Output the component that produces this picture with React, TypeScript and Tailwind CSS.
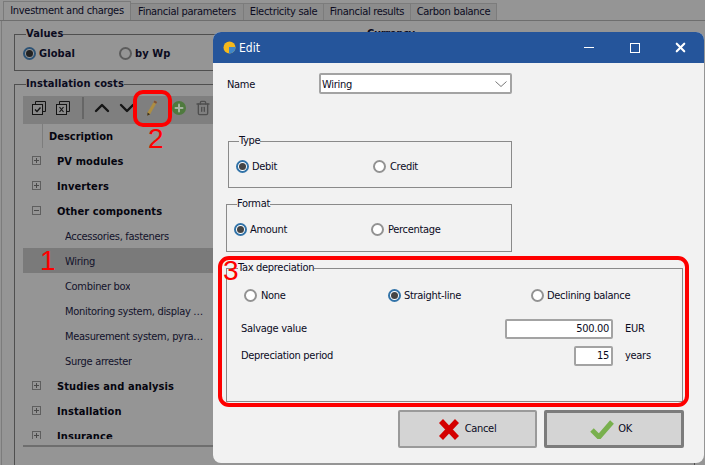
import React from 'react';
import { ChevronDown, ChevronUp, Plus, Trash2, X } from 'lucide-react';

const Radio: React.FC<{ on?: boolean; label: string; className?: string; dim?: boolean }> = ({ on, label, className = '', dim }) => (
  <label className={`flex items-center gap-[3px] ${className}`}>
    <span
      className={`flex h-[13px] w-[13px] shrink-0 items-center justify-center rounded-full border-2 ${
        dim ? (on ? 'border-[#2c5275] bg-[#959595]' : 'border-[#5c5c5c] bg-[#959595]') : on ? 'border-[#3273a8] bg-white' : 'border-[#939393] bg-white'
      }`}
    >
      {on && <span className={`h-[7px] w-[7px] rounded-full ${dim ? 'bg-[#222222]' : 'bg-[#444444]'}`} />}
    </span>
    <span className="pt-px">{label}</span>
  </label>
);

const TreeGroup: React.FC<{ label: string; open?: boolean }> = ({ label, open }) => (
  <div className="flex h-[25px] items-center pl-[9px]">
    <span className="flex h-[9px] w-[9px] items-center justify-center border border-[#5f5f5f]">
      <span className="relative block h-px w-[5px] bg-[#4a4a4a]">
        {!open && <span className="absolute left-[2px] top-[-2px] block h-[5px] w-px bg-[#4a4a4a]" />}
      </span>
    </span>
    <span className="ml-[16px] pt-[2px] font-bold tracking-[0.1px] text-[#05050f]">{label}</span>
  </div>
);

const TreeItem: React.FC<{ label: string; active?: boolean }> = ({ label, active }) => (
  <div className={`flex h-[25px] items-center pl-[42px] ${active ? 'bg-[#7a7a7a]' : ''}`}>
    <span className="truncate pt-[2px] text-[#12122a]">{label}</span>
  </div>
);

const tabs = [
  { label: 'Financial parameters', w: 'w-[113px]' },
  { label: 'Electricity sale', w: 'w-[80px]' },
  { label: 'Financial results', w: 'w-[87px]' },
  { label: 'Carbon balance', w: 'w-[86px]' },
];

export default function App() {
  return (
    <div className="relative h-[465px] w-[705px] overflow-hidden bg-[#959595] font-['DejaVu_Sans',sans-serif] font-stretch-condensed text-[11px] leading-[14px] tracking-[-0.3px] text-[#0b0b1e]">
      {/* page behind the dialog */}
      <div className="flex h-[21px] items-end border-b border-[#6e6e6e] pl-[3px]">
        <div className="flex h-[19px] w-[128px] items-center justify-center border border-b-0 border-[#7a7a7a] bg-[#959595]">
          Investment and charges
        </div>
        {tabs.map(t => (
          <div key={t.label} className={`flex h-[17px] items-center justify-center border-r border-t border-[#7c7c7c] bg-[#8c8c8c] ${t.w}`}>
            {t.label}
          </div>
        ))}
      </div>

      <div className="ml-[1px] h-[444px] border-l border-[#7c7c7c] pl-[12px] pr-[10px] pt-[6px]">
        <div className="flex gap-[12px]">
          <fieldset className="h-[44px] w-[331px] border border-[#4f4f4f] pl-[11px]">
            <legend className="font-bold tracking-[0.1px]">Values</legend>
            <div className="mt-[5px] flex font-bold tracking-[0.1px]">
              <Radio dim on label="Global" className="-ml-[3px] w-[96px]" />
              <Radio dim label="by Wp" />
            </div>
          </fieldset>
          <fieldset className="h-[44px] flex-1 border border-[#4f4f4f] pl-[9px]">
            <legend className="font-bold">Currency</legend>
          </fieldset>
        </div>

        <fieldset className="mt-[6px] h-[400px] border border-[#4f4f4f] pl-[8px]">
          <legend className="ml-[3px] font-bold tracking-[0.1px]">Installation costs</legend>
          <div className="mt-[5px] w-[190px]">
            <div className="flex h-[28px] items-center bg-[#7f7f7f] pb-[4px] pl-[9px]">
              <svg className="shrink-0" width="14" height="14" viewBox="0 0 14 14" fill="none" stroke="#141414">
                <path d="M3.5 3V.5h10v10H11" />
                <rect x=".5" y="3.5" width="10" height="10" fill="#8a8a8a" />
                <path d="M3 8.5l2 2 3.5-4" strokeWidth="1.4" />
              </svg>
              <svg className="ml-[10px] shrink-0" width="14" height="14" viewBox="0 0 14 14" fill="none" stroke="#141414">
                <path d="M3.5 3V.5h10v10H11" />
                <rect x=".5" y="3.5" width="10" height="10" fill="#8a8a8a" />
                <path d="M3.5 6l4 5M7.5 6l-4 5" strokeWidth="1.2" />
              </svg>
              <span className="ml-[12px] h-[22px] w-[2px] shrink-0 bg-[#666666]" />
              <ChevronUp className="ml-[6px] shrink-0 text-[#151515]" size={24} strokeWidth={2.4} />
              <ChevronDown className="ml-[1px] shrink-0 text-[#151515]" size={24} strokeWidth={2.4} />
              <svg className="ml-[7px] shrink-0" width="12" height="18" viewBox="0 0 12 18">
                <path d="M8.5 1.5l2.6 1.4-7 12.4-2.8 1.4.2-3.2z" fill="#ad8d42" />
                <path d="M8.5 1.5l2.6 1.4-1 1.8-2.6-1.4z" fill="#7d4f3a" />
                <path d="M1.3 16.7l.2-3.2 2.6 1.8z" fill="#3a3020" />
              </svg>
              <span className="ml-[14px] flex h-[14px] w-[14px] shrink-0 items-center justify-center rounded-full bg-[#4f7a3e]">
                <Plus className="text-[#a5b3a0]" size={12} strokeWidth={4} />
              </span>
              <Trash2 className="ml-[9px] shrink-0 text-[#4f4f4f]" size={16} strokeWidth={2} />
            </div>
            <div className="flex h-[24px] items-center">
              <span className="h-full w-[20px] border-r border-[#7d7d7d]" />
              <span className="ml-[6px] pt-px font-bold tracking-normal text-[#05050f]">Description</span>
            </div>
            <TreeGroup label="PV modules" />
            <TreeGroup label="Inverters" />
            <TreeGroup label="Other components" open />
            <TreeItem label="Accessories, fasteners" />
            <TreeItem label="Wiring" active />
            <TreeItem label="Combiner box" />
            <TreeItem label="Monitoring system, display …" />
            <TreeItem label="Measurement system, pyra…" />
            <TreeItem label="Surge arrester" />
            <TreeGroup label="Studies and analysis" />
            <TreeGroup label="Installation" />
            <div className="mb-[6px] h-[16px] overflow-hidden">
              <TreeGroup label="Insurance" />
            </div>
            <div className="h-[2px] bg-[#6e6e6e]" />
          </div>
        </fieldset>
      </div>

      {/* dialog */}
      <div className="absolute left-[213px] top-[32px] flex h-[431px] w-[491px] flex-col overflow-hidden rounded-[8px] bg-[#f2f2f2]">
        <div className="flex h-[31px] shrink-0 items-center bg-[#25559b] pl-[10px] pr-[16px] text-[12px] tracking-normal text-white">
          <svg width="13" height="13" viewBox="0 0 13 13">
            <circle cx="6.5" cy="6.5" r="6" fill="#f4b81c" />
            <path d="M6 6h6.5a6 6 0 0 1-6 6.5H6z" fill="#3f86c9" />
          </svg>
          <span className="ml-[3px]">Edit</span>
          <span className="ml-auto h-px w-[10px] bg-white" />
          <span className="ml-[36px] h-[10px] w-[10px] border border-white" />
          <X className="ml-[33px]" size={15} strokeWidth={3.4} />
        </div>

        <div className="mt-[10px] flex h-[21px] items-center pl-[14px]">
          <span className="w-[92px] pt-[2px]">Name</span>
          <div className="flex h-[21px] w-[193px] items-center justify-between rounded-[2px] border-2 border-[#a3a3a3] bg-white pl-[1px] pr-[3px]">
            <span className="pt-[2px]">Wiring</span>
            <svg width="12" height="6" viewBox="0 0 12 6" fill="none" stroke="#777777">
              <path d="M.5.5l5.5 5 5.5-5" />
            </svg>
          </div>
        </div>

        <fieldset className="ml-[15px] mt-[40px] h-[54px] w-[284px] border border-[#8a8a8a] pl-[7px]">
          <legend className="ml-[3px]">Type</legend>
          <div className="mt-[11px] flex">
            <Radio on label="Debit" className="w-[137px]" />
            <Radio label="Credit" className="gap-[4px]" />
          </div>
        </fieldset>

        <fieldset className="ml-[13px] mt-[9px] h-[55px] w-[286px] border border-[#8a8a8a] pl-[7px]">
          <legend className="ml-[3px]">Format</legend>
          <div className="mt-[11px] flex">
            <Radio on label="Amount" className="w-[137px]" />
            <Radio label="Percentage" className="gap-[4px]" />
          </div>
        </fieldset>

        <fieldset className="ml-[13px] mt-[9px] h-[141px] w-[457px] border border-[#8a8a8a] pl-[14px]">
          <legend className="-ml-[3px]">Tax depreciation</legend>
          <div className="mt-[13px] flex pl-[3px]">
            <Radio label="None" className="w-[144px] gap-[4px]" />
            <Radio on label="Straight-line" className="w-[143px]" />
            <Radio label="Declining balance" />
          </div>
          <div className="mt-[16px] flex h-[20px] items-center">
            <span className="w-[264px]">Salvage value</span>
            <div className="flex h-[20px] w-[108px] items-center justify-end rounded-[2px] border-2 border-[#a3a3a3] bg-white pr-[2px]">500.00</div>
            <span className="ml-[12px]">EUR</span>
          </div>
          <div className="mt-[7px] flex h-[20px] items-center">
            <span className="w-[333px]">Depreciation period</span>
            <div className="flex h-[20px] w-[39px] items-center justify-end rounded-[2px] border-2 border-[#a3a3a3] bg-white pr-[2px]">15</div>
            <span className="ml-[12px]">years</span>
          </div>
        </fieldset>

        <div className="ml-[185px] mt-[8px] flex gap-[7px]">
          <button className="flex h-[38px] w-[139px] items-center justify-center gap-[6px] rounded-[2px] border-2 border-[#9a9a9a] bg-[#d4d4d4]">
            <svg width="20" height="21" viewBox="0 0 20 21" fill="none" stroke="#d40000" strokeWidth="5.5">
              <path d="M2 2l16 17M18 2L2 19" />
            </svg>
            Cancel
          </button>
          <button className="flex h-[38px] w-[140px] items-center justify-center gap-[4px] rounded-[2px] border-[3px] border-[#7c7c7c] bg-[#d4d4d4] pr-[6px]">
            <svg width="24" height="19" viewBox="0 0 24 19" fill="none" stroke="#79b04e" strokeWidth="5">
              <path d="M2 10l7 7L22 2" />
            </svg>
            OK
          </button>
        </div>
      </div>

      {/* red annotations */}
      <div className="absolute left-[133px] top-[90px] h-[37px] w-[39px] rounded-[10px] border-4 border-[#fe0000]" />
      <span className="absolute left-[148px] top-[124px] font-['Liberation_Sans',sans-serif] text-[28px] leading-[30px] text-[#fe0000]">2</span>
      <span className="absolute left-[40px] top-[246px] font-['Liberation_Sans',sans-serif] text-[28px] leading-[30px] text-[#fe0000]">1</span>
      <div className="absolute left-[218px] top-[256px] h-[151px] w-[471px] rounded-[11px] border-4 border-[#fe0000]" />
      <span className="absolute left-[223px] top-[256px] font-['Liberation_Sans',sans-serif] text-[28px] leading-[30px] text-[#fe0000]">3</span>
    </div>
  );
}
